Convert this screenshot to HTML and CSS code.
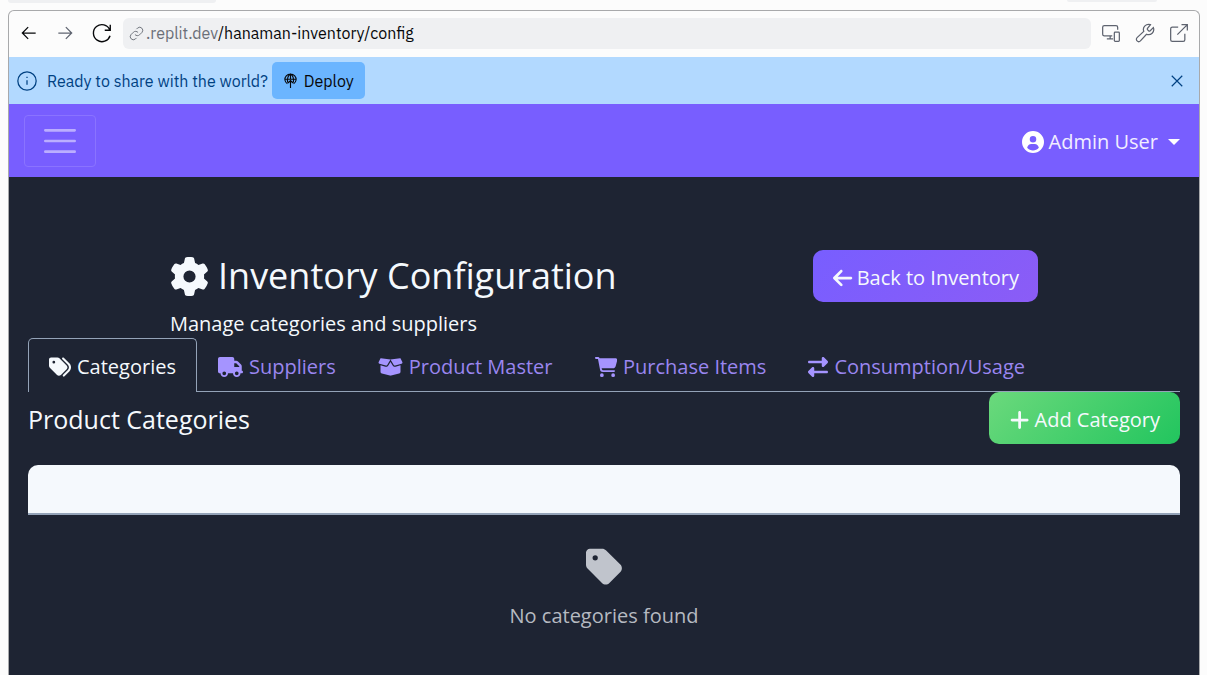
FILE: index.html
```html
<!DOCTYPE html>
<html lang="en">
<head>
<meta charset="utf-8">
<meta name="viewport" content="width=device-width, initial-scale=1">
<title>Inventory Configuration</title>
<link rel="stylesheet" href="styles.css">
</head>
<body>
<div class="workspace">
  <div class="pane-tabs"><span class="pane-tab pane-tab-wide"></span><span class="pane-tab"></span></div>
  <div class="preview">
    <div class="toolbar">
      <button class="tool tool-dark" aria-label="Back"><svg class="line" viewBox="0 0 24 24"><path d="M20 12H4.500M11 5l-7 7 7 7"/></svg></button>
      <button class="tool" aria-label="Forward"><svg class="line" viewBox="0 0 24 24"><path d="M4 12h15.500M13 5l7 7-7 7"/></svg></button>
      <button class="tool tool-dark" aria-label="Reload"><svg class="line icon-reload" viewBox="0 0 24 24"><path d="M21 3v6h-6M20.500 8.500A9.300 9.300 0 1 0 20.800 15"/></svg></button>
      <div class="address">
        <svg class="line icon-link" viewBox="0 0 24 24"><path d="M9.500 13.500a5 5 0 0 0 7.500.5l4-4a5 5 0 0 0-7-7l-2 2M14.500 10.500a5 5 0 0 0-7.500-.5l-4 4a5 5 0 0 0 7 7l2-2"/></svg>
        <span><span class="host">.replit.dev</span>/hanaman-inventory/config</span>
      </div>
      <div class="tools-end">
        <button class="tool" aria-label="Devices"><svg class="line" viewBox="0 0 24 24"><path d="M13.500 15.500H4a2 2 0 0 1-2-2V5a2 2 0 0 1 2-2h14a2 2 0 0 1 2 2v3M11 15.500V19M7 19h7.500M17 11h4a1 1 0 0 1 1 1v9a1 1 0 0 1-1 1h-4a1 1 0 0 1-1-1v-9a1 1 0 0 1 1-1z"/></svg></button>
        <button class="tool" aria-label="Developer tools"><svg class="line" viewBox="0 0 24 24"><path d="M15 6.500a1.500 1.500 0 0 0 0 1.500l1.500 1.500a1.500 1.500 0 0 0 1.500 0l4-4a6.200 6.200 0 0 1-8.200 8L6.500 21.500a2.500 2.500 0 0 1-4-4L10.500 10A6.200 6.200 0 0 1 18.500 2z"/></svg></button>
        <button class="tool" aria-label="Open in new tab"><svg class="line" viewBox="0 0 24 24"><path d="M11 5H4a2 2 0 0 0-2 2v13a2 2 0 0 0 2 2h13a2 2 0 0 0 2-2v-7M15 2h7v7M22 2L10 14"/></svg></button>
      </div>
    </div>
    <div class="banner">
      <svg class="line icon-info" viewBox="0 0 24 24"><circle cx="12" cy="12" r="11"/><path d="M12 11v5.500M12 7v1.500"/></svg>
      <span>Ready to share with the world?</span>
      <button class="deploy"><svg class="line icon-deploy" viewBox="0 0 24 24"><path d="M7 17.200A9 8.500 0 1 1 17 17.200M3.500 10h17M7.500 15C6.500 9 8 4 12 1.500 16 4 17.500 9 16.500 15M12 1.500V10M12 24V12M8 16l4-4 4 4"/></svg>Deploy</button>
      <button class="close" aria-label="Dismiss"><svg class="line icon-close" viewBox="0 0 24 24"><path d="M3 3l18 18M21 3L3 21"/></svg></button>
    </div>
    <div class="app">
      <nav class="navbar">
        <button class="menu" aria-label="Menu"><svg viewBox="0 0 30 30"><path d="M4 7h22M4 15h22M4 23h22"/></svg></button>
        <button class="user">
          <svg class="solid" viewBox="0 0 512 512"><path fill-rule="evenodd" d="M256 0a256 256 0 1 0 0 512 256 256 0 0 0 0-512zM256 114a76 76 0 1 1 0 152 76 76 0 0 1 0-152zM120 388c12-48 48-84 96-84h80c48 0 84 36 96 84-72 84-200 84-272 0z"/></svg>
          Admin User<span class="caret"></span>
        </button>
      </nav>
      <main class="content">
        <header class="page-head">
          <div>
            <h1><svg class="solid icon-gear" viewBox="0 0 512 512"><path d="M495.900 166.600c3.200 8.700 .5 18.400-6.400 24.600l-43.300 39.400c1.100 8.300 1.700 16.800 1.700 25.400s-.6 17.100-1.700 25.400l43.300 39.400c6.900 6.200 9.600 15.900 6.400 24.600c-4.400 11.900-9.700 23.300-15.800 34.300l-4.700 8.100c-6.600 11-14 21.400-22.100 31.200c-5.900 7.200-15.700 9.600-24.500 6.800l-55.700-17.700c-13.400 10.300-28.200 18.900-44 25.400l-12.500 57.100c-2 9.100-9 16.300-18.200 17.800c-13.800 2.300-28 3.500-42.500 3.500s-28.700-1.200-42.500-3.500c-9.200-1.500-16.200-8.700-18.200-17.800l-12.500-57.100c-15.800-6.500-30.600-15.100-44-25.400L83.100 425.900c-8.800 2.800-18.600 .3-24.500-6.800c-8.100-9.800-15.500-20.200-22.100-31.200l-4.700-8.100c-6.100-11-11.400-22.400-15.800-34.300c-3.200-8.700-.5-18.400 6.400-24.600l43.300-39.400C64.600 273.100 64 264.600 64 256s.6-17.100 1.700-25.400L22.400 191.200c-6.900-6.200-9.600-15.900-6.400-24.600c4.400-11.900 9.700-23.300 15.800-34.300l4.700-8.100c6.600-11 14-21.400 22.100-31.200c5.900-7.200 15.700-9.600 24.500-6.800l55.700 17.700c13.400-10.300 28.200-18.900 44-25.400l12.500-57.100c2-9.100 9-16.300 18.200-17.800C227.300 1.200 241.500 0 256 0s28.700 1.200 42.500 3.500c9.200 1.500 16.200 8.700 18.200 17.800l12.500 57.100c15.800 6.500 30.600 15.100 44 25.400l55.700-17.700c8.800-2.800 18.600-.3 24.500 6.800c8.100 9.800 15.500 20.200 22.100 31.200l4.700 8.100c6.100 11 11.400 22.400 15.800 34.300zM256 336a80 80 0 1 0 0-160 80 80 0 1 0 0 160z"/></svg>Inventory Configuration</h1>
            <p>Manage categories and suppliers</p>
          </div>
          <a class="btn btn-purple" href="#inventory"><svg class="solid" viewBox="0 0 448 512"><path d="M9.400 233.400c-12.500 12.500-12.500 32.800 0 45.300l160 160c12.500 12.500 32.800 12.500 45.300 0s12.500-32.800 0-45.300L109.200 288 416 288c17.700 0 32-14.300 32-32s-14.300-32-32-32l-306.700 0L214.600 118.600c12.500-12.500 12.500-32.800 0-45.300s-32.800-12.500-45.300 0l-160 160z"/></svg>Back to Inventory</a>
        </header>
        <div class="tabs" role="tablist">
          <button class="tab active" role="tab" aria-selected="true"><svg class="solid" viewBox="0 0 512 512"><path d="M345 39.100L472.800 168.400c52.400 53 52.400 138.200 0 191.200L360.800 472.900c-9.300 9.400-24.500 9.500-33.900 .2s-9.500-24.500-.2-33.900L438.600 325.900c33.900-34.300 33.900-89.400 0-123.700L310.900 72.900c-9.300-9.400-9.200-24.600 .2-33.900s24.600-9.200 33.900 .2zM0 229.500V80C0 53.500 21.500 32 48 32H197.500c17 0 33.300 6.700 45.300 18.700l168 168c25 25 25 65.500 0 90.500L277.300 442.700c-25 25-65.500 25-90.500 0l-168-168C6.700 262.700 0 246.500 0 229.500zM144 144a32 32 0 1 0 -64 0 32 32 0 1 0 64 0z"/></svg>Categories</button>
          <button class="tab" role="tab"><svg class="solid" viewBox="0 0 640 512"><path d="M48 0C21.500 0 0 21.500 0 48V368c0 26.500 21.500 48 48 48H64c0 53 43 96 96 96s96-43 96-96H384c0 53 43 96 96 96s96-43 96-96h32c17.700 0 32-14.300 32-32s-14.300-32-32-32V288 256 237.300c0-17-6.700-33.300-18.700-45.300L512 114.700c-12-12-28.300-18.700-45.300-18.700H416V48c0-26.500-21.500-48-48-48H48zM416 160h50.700L544 237.300V256H416V160zM112 416a48 48 0 1 1 96 0 48 48 0 1 1 -96 0zm368-48a48 48 0 1 1 0 96 48 48 0 1 1 0-96z"/></svg>Suppliers</button>
          <button class="tab" role="tab"><svg class="solid" viewBox="0 0 640 512"><path d="M58.900 42.100c3-6.100 9.600-9.600 16.300-8.700L320 64 564.800 33.400c6.700-.8 13.300 2.700 16.300 8.700l41.700 83.400c9 17.900-.6 39.600-19.800 45.100L439.600 217.300c-13.900 4-28.800-1.900-36.200-14.300L320 64 236.600 203c-7.400 12.400-22.300 18.300-36.200 14.300L37.100 170.600c-19.300-5.500-28.800-27.200-19.800-45.100L58.900 42.100zM321.100 128l54.900 91.400c14.900 24.800 44.600 36.600 72.500 28.600L576 211.600v167c0 22-15 41.200-36.400 46.600l-204.100 51c-10.200 2.600-20.900 2.600-31 0l-204.100-51C79 419.700 64 400.500 64 378.500v-167L191.600 248c27.800 8 57.600-3.800 72.500-28.600L318.900 128h2.200z"/></svg>Product Master</button>
          <button class="tab" role="tab"><svg class="solid" viewBox="0 0 576 512"><path d="M0 24C0 10.700 10.700 0 24 0H69.500c22 0 41.500 12.800 50.600 32h411c26.300 0 45.500 25 38.600 50.400l-41 152.300c-8.500 31.400-37 53.300-69.500 53.300H170.700l5.400 28.500c2.200 11.300 12.100 19.500 23.600 19.500H488c13.300 0 24 10.700 24 24s-10.700 24-24 24H199.700c-34.600 0-64.300-24.600-70.700-58.500L77.400 54.500c-.7-3.800-4-6.500-7.900-6.500H24C10.700 48 0 37.300 0 24zM128 464a48 48 0 1 1 96 0 48 48 0 1 1 -96 0zm336-48a48 48 0 1 1 0 96 48 48 0 1 1 0-96z"/></svg>Purchase Items</button>
          <button class="tab" role="tab"><svg class="solid" viewBox="0 0 512 512"><path d="M32 96l320 0V32c0-12.900 7.800-24.600 19.800-29.600s25.700-2.200 34.900 6.900l96 96c6 6 9.400 14.100 9.400 22.600s-3.400 16.600-9.400 22.600l-96 96c-9.200 9.200-22.900 11.900-34.900 6.900s-19.800-16.600-19.800-29.600V160L32 160c-17.700 0-32-14.300-32-32s14.300-32 32-32zM480 352c17.700 0 32 14.300 32 32s-14.300 32-32 32H160v64c0 12.900-7.800 24.600-19.800 29.600s-25.700 2.200-34.900-6.900l-96-96c-6-6-9.400-14.100-9.400-22.600s3.400-16.600 9.400-22.600l96-96c9.200-9.200 22.900-11.900 34.900-6.900s19.800 16.600 19.800 29.600l0 64H480z"/></svg>Consumption/Usage</button>
        </div>
        <section>
          <div class="section-head">
            <h2>Product Categories</h2>
            <button class="btn btn-green"><svg class="solid" viewBox="0 0 448 512"><path d="M256 80c0-17.700-14.300-32-32-32s-32 14.300-32 32V224H48c-17.700 0-32 14.300-32 32s14.300 32 32 32H192V432c0 17.700 14.300 32 32 32s32-14.300 32-32V288H400c17.700 0 32-14.300 32-32s-14.300-32-32-32H256V80z"/></svg>Add Category</button>
          </div>
          <table class="grid">
            <thead><tr><th></th></tr></thead>
            <tbody><tr><td>
              <svg class="icon-tag" viewBox="0 0 448 512"><path d="M0 80V229.500c0 17 6.700 33.300 18.700 45.300l176 176c25 25 65.500 25 90.500 0L418.700 317.300c25-25 25-65.500 0-90.500l-176-176c-12-12-28.300-18.700-45.300-18.700H48C21.500 32 0 53.500 0 80zm112 32a32 32 0 1 1 0 64 32 32 0 1 1 0-64z"/></svg>
              <p>No categories found</p>
            </td></tr></tbody>
          </table>
        </section>
      </main>
    </div>
  </div>
</div>
</body>
</html>
```
FILE: styles.css
```css
* { box-sizing: border-box; }
body, h1, h2, p { margin: 0; font-weight: 400; }
body { background: #fcfcfc; font-family: "Open Sans", "Noto Sans", sans-serif; }
button { font: inherit; color: inherit; background: none; border: 0; padding: 0; }
svg { display: block; flex: none; }
.line { width: 20px; height: 20px; fill: none; stroke: currentColor; stroke-width: 1.5; }
.solid { height: 1em; fill: currentColor; }

.workspace { display: flex; flex-direction: column; height: 100vh; padding: 0 7px 0 8px; overflow: hidden; }
.pane-tabs { display: flex; justify-content: space-between; height: 10px; padding-right: 43px; flex: none; }
.pane-tab { width: 90px; height: 2px; background: #eff0f2; border-radius: 0 0 4px 4px; }
.pane-tab-wide { width: 208px; height: 3px; }
.preview { display: flex; flex-direction: column; flex: 1; min-height: 0; border: 1px solid #a8a9ab; border-bottom: 0; border-radius: 6px 6px 0 0; overflow: hidden; }

.toolbar { display: flex; align-items: center; height: 46px; flex: none; padding: 0 10px 2px; gap: 16px; font: 16px "IBM Plex Sans", Roboto, sans-serif; }
.tool { color: #5f6470; }
.tool-dark { color: #07080a; }
.icon-reload { width: 22px; height: 22px; }
.address { display: flex; align-items: center; gap: 2px; flex: 1; height: 31px; padding: 0 6px; margin-left: -6px; border-radius: 6px; background: #eff0f2; color: #07080a; font-size: 16px; }
.icon-link { width: 15px; height: 15px; color: #6b6f78; }
.host { color: #6b6f78; }
.tools-end { display: flex; gap: 14px; margin-left: -6px; }

.banner { display: flex; align-items: center; height: 47px; flex: none; padding: 0 15px 0 8px; background: #b2d9ff; color: #004182; font: 16px "IBM Plex Sans", Roboto, sans-serif; }
.icon-info { margin-right: 10px; }
.deploy { display: flex; align-items: center; gap: 6px; height: 37px; margin-left: 4px; padding: 0 11px; border-radius: 5px; background: #6bb5ff; color: #07080a; }
.icon-deploy { width: 15px; height: 15px; stroke-width: 1.8; }
.close { margin-left: auto; }
.icon-close { width: 14px; height: 14px; stroke-width: 2; }

.app { flex: 1; min-height: 0; background: #1e2433; color: #f5f9fd; font-size: 20px; line-height: 32px; }
.navbar { display: flex; align-items: center; justify-content: space-between; height: 73px; padding: 0 19px 0 15px; background: #785eff; }
.menu { display: flex; align-items: center; justify-content: center; width: 72px; height: 52px; border: 1px solid #8a73ff; border-radius: 4px; }
.menu svg { width: 40px; height: 40px; fill: none; stroke: #bbaeff; stroke-width: 2; stroke-linecap: round; }
.user { display: flex; align-items: center; gap: 5px; padding-top: 3px; color: #f1eeff; font-size: 20px; }
.user svg { height: 22px; fill: #ffffff; }
.caret { margin-left: 5px; border: 6px solid transparent; border-top-color: #ffffff; border-bottom: 0; }

.content { padding: 73px 19px 0; }
.page-head { display: flex; align-items: flex-start; justify-content: space-between; max-width: 868px; margin: 0 auto; }
h1 { display: flex; align-items: center; gap: 9px; font-size: 36px; line-height: 52px; }
.icon-gear { height: 39px; }
.page-head p { padding-top: 6px; line-height: 32px; margin-bottom: -2px; }
.btn { display: flex; align-items: center; gap: 5px; height: 52px; padding: 3px 20px 0; border-radius: 10px; color: #f5f9fd; text-decoration: none; }
.btn .solid { height: 22px; }
.btn-purple { gap: 4px; padding: 3px 19px 0 20px; background: linear-gradient(135deg, #785eff, #8b5cf6); }
.btn-green { padding: 3px 20px 0 21px; background: linear-gradient(135deg, #6bd97c, #22c55e); }

.tabs { display: flex; border-bottom: 1px solid #94a3b8; }
.tab { display: flex; align-items: center; gap: 6px; height: 54px; padding: 2px 20px 0; margin-bottom: -1px; border: 1px solid transparent; border-bottom: 0; border-radius: 5px 5px 0 0; color: #9a86f0; white-space: nowrap; }
.tab .solid { height: 20px; fill: #a594ff; }
.tab.active { background: #1e2433; border-color: #94a3b8; color: #f5f9fd; }
.tab.active .solid { height: 22px; fill: #f5f9fd; }

.section-head { display: flex; align-items: center; justify-content: space-between; }
h2 { padding-top: 1px; font-size: 25px; }
.grid { width: 100%; margin-top: 21px; border-spacing: 0; }
.grid th { height: 50px; padding: 0; background: #f5f9fd; border-bottom: 2px solid #94a3b8; border-radius: 10px 10px 0 0; }
.grid td { padding: 31px 0; text-align: center; color: #b6bac1; }
.icon-tag { height: 42px; margin: 0 auto 12px; fill: #c0c4cc; }
```
